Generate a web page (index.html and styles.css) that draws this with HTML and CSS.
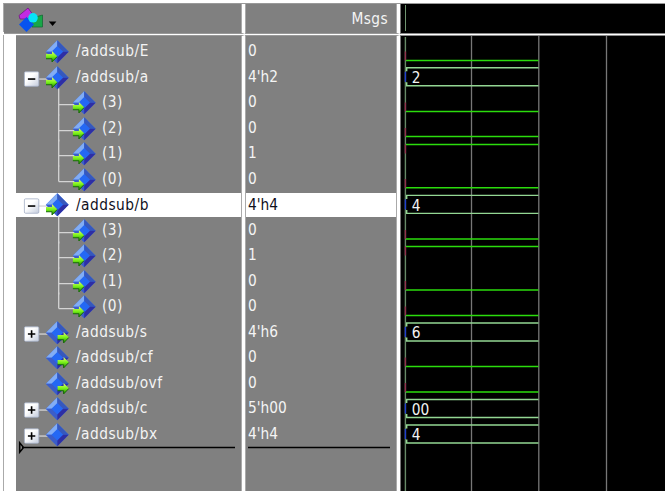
FILE: index.html
```html
<!DOCTYPE html>
<html lang="en">
<head>
<meta charset="utf-8">
<title>Wave</title>
<link rel="stylesheet" href="styles.css">
</head>
<body>
<svg class="defs" aria-hidden="true">
  <defs>
    <g id="gem">
      <path d="M0-11.4 11.4 0 0 11.4-11.4 0Z" fill="#3469e4"/>
      <path d="M0-11.4V-5L-5.5 0H-11.4Z" fill="#82adf5"/>
      <path d="M0-11.4 11.4 0H5.5L0-5Z" fill="#3658bd"/>
      <path d="M-11.4 0H-5.5L0 5V11.4Z" fill="#3b5dc9"/>
      <path d="M11.4 0 0 11.4V5L5.5 0Z" fill="#2e2ea4"/>
      <path d="M0-5.7 5.7 0 0 5.7-5.7 0Z" fill="#2468f4"/>
    </g>
    <linearGradient id="lime" x2="0" y2="1">
      <stop offset="0" stop-color="#e4ff70"/><stop offset=".5" stop-color="#76f018"/><stop offset="1" stop-color="#188000"/>
    </linearGradient>
    <g id="arrow">
      <path d="M0 2.5H6V-.5L11.2 4.6 6 10.4V7.2H0Z" fill="url(#lime)"/>
      <path d="M0 7.2H6V10.4L11.2 5" fill="none" stroke="#176b08" stroke-width="1"/>
    </g>
    <linearGradient id="face" x2="1" y2="1">
      <stop offset=".4" stop-color="#fff"/><stop offset="1" stop-color="#c3cbdc"/>
    </linearGradient>
    <g id="box">
      <rect x="-7.2" y="-7.2" width="14.4" height="14.4" rx="1.2" fill="url(#face)" stroke="#a3afc5" stroke-width=".8"/>
    </g>
  </defs>
</svg>
<div class="window">
  <header class="head">
    <div class="head-tools">
      <svg width="50" height="27" viewBox="5 4 50 27">
        <path d="M19 14.5 28 7 32.5 13 27 18H20Z" fill="#c32be2" stroke="#701582" stroke-width=".8"/>
        <path d="M32 17 42.5 14V26H32Z" fill="#18a748" stroke="#176b35" stroke-width=".8"/>
        <path d="M26.5 16 34 23.5 26.5 31 19 23.5Z" fill="#0753ef"/>
        <circle cx="33" cy="16.8" r="4.8" fill="#08e3f8"/>
        <path d="M48.8 20.5H56.4L52.6 25Z" fill="#000"/>
      </svg>
    </div>
    <div class="head-msgs">Msgs</div>
    <div class="head-wave"></div>
  </header>
  <main class="body">
    <div class="names" id="names"></div>
    <div class="values" id="values"></div>
    <div class="waves" id="waves"></div>
  </main>
</div>
<script src="script.js"></script>
</body>
</html>
```
FILE: styles.css
```css
* { box-sizing: border-box; }
body {
  margin: 0;
  background: #fff;
  overflow: hidden;
  font: 15.3px/25.5px "DejaVu Sans Condensed", "DejaVu Sans", sans-serif;
  font-stretch: condensed;
  color: #f4f4f4;
}
.defs { position: absolute; width: 0; height: 0; }
svg { display: block; overflow: visible; }
.window {
  width: 665px;
  height: 491px;
  padding-top: 3px;
  padding-left: 3px;
  display: flex;
  flex-direction: column;
}
.head, .body {
  display: grid;
  grid-template-columns: 241px 155px 1fr;
  border-left: 1px solid #aaa;
}
.head {
  height: 29px;
  border-top: 1px solid #999;
}
.head-tools, .head-msgs {
  background: #808080;
  border-bottom: 1px solid #999;
  border-right: 3px solid #fff;
  box-shadow: inset -1px 0 #aaa;
}
.head-tools { padding: 1px 0 0 1px; }
.head-msgs {
  text-align: right;
  padding: 3px 9px 0 0;
  border-left: 1px solid #aaa;
  letter-spacing: .4px;
}
.head-wave { background: #000; border-left: 1px solid #777; border-bottom: 1px solid #888; }
.head-wave::before {
  content: "";
  display: block;
  width: 1px;
  height: 26px;
  margin: 1px 0 0 4px;
  background: #6f946f;
}
.body {
  flex: 1;
  margin-top: 3px;
}
.names {
  margin-left: 12px;
  padding-top: 3px;
  background: #808080;
  border-top: 1px solid #999;
  border-right: 3px solid #fff;
  box-shadow: inset -1px 0 #aaa;
  letter-spacing: .48px;
}
.values {
  padding-top: 3px;
  background: #808080;
  border-top: 1px solid #999;
  border-left: 1px solid #aaa;
  border-right: 3px solid #fff;
  box-shadow: inset -1px 0 #aaa;
}
.row { display: flex; height: 25.5px; white-space: pre; line-height: 25.5px; }
.row.selected {
  height: 24px;
  margin: .75px 1px .75px 0;
  line-height: 24px;
  background: #fff;
  color: #10101c;
}
.row svg { flex: none; width: 60px; height: 25.5px; }
.selected svg { margin-top: -.75px; }
.row .child { margin-left: 26px; }
.values .row { padding-left: 2px; }
.insert-line { height: 0; position: relative; }
.insert-line svg { position: absolute; left: 0; top: 0; }
.waves { background: #000; border-left: 1px solid #777; border-top: 1px solid #888; }
.waves text { fill: #f3f3f3; }
```
FILE: script.js
```js
// level: tree depth, box: expander sign, dir: port direction, y: trace position(s)
const signals = [
  { name: "/addsub/E", value: "0", dir: "in", y: [60.4] },
  { name: "/addsub/a", value: "4'h2", dir: "in", box: "-", bus: "2", y: [67.8, 85.8] },
  { name: "(3)", value: "0", dir: "in", level: 1, y: [111.4] },
  { name: "(2)", value: "0", dir: "in", level: 1, y: [136.6] },
  { name: "(1)", value: "1", dir: "in", level: 1, y: [144.4] },
  { name: "(0)", value: "0", dir: "in", level: 1, last: true, y: [187.8] },
  { name: "/addsub/b", value: "4'h4", dir: "in", box: "-", bus: "4", selected: true, y: [195.4, 213.4] },
  { name: "(3)", value: "0", dir: "in", level: 1, y: [238.9] },
  { name: "(2)", value: "1", dir: "in", level: 1, y: [246.5] },
  { name: "(1)", value: "0", dir: "in", level: 1, y: [290] },
  { name: "(0)", value: "0", dir: "in", level: 1, last: true, y: [315.5] },
  { name: "/addsub/s", value: "4'h6", dir: "out", box: "+", bus: "6", y: [323, 341] },
  { name: "/addsub/cf", value: "0", dir: "out", y: [366.4] },
  { name: "/addsub/ovf", value: "0", dir: "out", y: [392] },
  { name: "/addsub/c", value: "5'h00", box: "+", bus: "00", y: [399.5, 417.5] },
  { name: "/addsub/bx", value: "4'h4", box: "+", bus: "4", y: [425, 443] }
];

function treeIcon(s) {
  const line = 'fill="none" stroke="#d4d4d4" stroke-width="1.3"';
  const cx = s.level ? 68.2 : 41.3;
  let g = "";
  if (s.level) {
    g += `<path ${line} d="M42.7-14.2V${s.last ? 1.8 : 12.8}M42.7 1.8H59"/>`;
  } else if (s.box) {
    g += `<path ${line} d="M22 1.3H32"/><use href="#box" x="15.6" y="1.3"/>`;
    g += `<path d="M11.9 1.3H19.3${s.box === "+" ? "M15.6-2.4V5" : ""}" stroke="#000" stroke-width="1.6"/>`;
  }
  g += `<use href="#gem" x="${cx}" y="0"/>`;
  if (s.dir) g += `<use href="#arrow" x="${s.dir === "in" ? cx - 11.3 : cx + .3}" y="-.2"/>`;
  return `<svg viewBox="0 -12.75 60 25.5">${g}</svg>`;
}

const cls = s => "row" + (s.selected ? " selected" : "");
const insert = (x1, x2, mark) =>
  `<div class="insert-line"><svg width="${x2}" height="2"><path d="M${x1} .5H${x2}${mark ? "M3.7-4.2V5.2L7.6.5Z" : ""}" fill="none" stroke="#000" stroke-width="1.5"/></svg></div>`;

document.getElementById("names").innerHTML = signals.map(s =>
  `<div class="${cls(s)}">${treeIcon(s)}<span class="${s.level ? "child" : ""}">${s.name}</span></div>`
).join("") + insert(6, 219, true);

document.getElementById("values").innerHTML = signals.map(s =>
  `<div class="${cls(s)}">${s.value}</div>`
).join("") + insert(2, 144, false);

let art = "";
for (const x of [471.5, 538.8, 606.5])
  art += `<path d="M${x} 36V491" stroke="#777" stroke-width="1.3"/>`;
art += '<path d="M405.4 37V491" stroke="#668966" stroke-width="1.4"/>';
signals.forEach((s, i) => {
  const mid = 51.5 + i * 25.5;
  if (s.bus) {
    const [t, b] = s.y;
    art += `<path d="M405.4 ${t + 4}V${b - 4}" stroke="#1f3fd0" stroke-width="1.4"/>`;
    art += `<path d="M538.5 ${t}H406.7V${t + 3.5}M538.5 ${b}H406.7V${b - 3.5}" fill="none" stroke="#93d693" stroke-width="1.4"/>`;
    art += `<text x="411.8" y="${b - 2.6}">${s.bus}</text>`;
  } else {
    art += `<path d="M405.4 ${mid}V${s.y[0]}" stroke="#92304c" stroke-width="1.4"/>`;
    art += `<path d="M406 ${s.y[0]}H538.5" stroke="#2bdc0c" stroke-width="1.5"/>`;
  }
});
document.getElementById("waves").innerHTML =
  `<svg width="264" height="455" viewBox="401 36 264 455">${art}</svg>`;
```
